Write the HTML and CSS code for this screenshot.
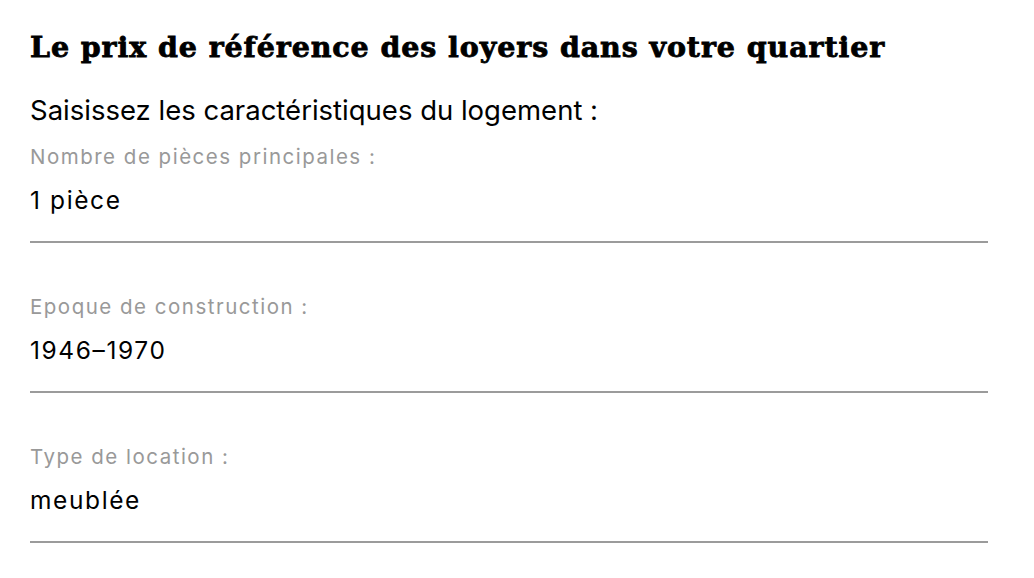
FILE: index.html
```html
<!DOCTYPE html>
<html lang="fr">
<head>
<meta charset="utf-8">
<title>Le prix de référence des loyers</title>
<link rel="stylesheet" href="styles.css">
</head>
<body>
<main class="form">
  <h1 class="title">Le prix de référence des loyers dans votre quartier</h1>
  <p class="intro">Saisissez les caractéristiques du logement :</p>
  <div class="fields">
    <div class="field">
      <div class="label">Nombre de pièces principales :</div>
      <div class="value">1 pièce</div>
    </div>
    <div class="field">
      <div class="label">Epoque de construction :</div>
      <div class="value">1946–1970</div>
    </div>
    <div class="field">
      <div class="label">Type de location :</div>
      <div class="value">meublée</div>
    </div>
  </div>
</main>
</body>
</html>
```
FILE: styles.css
```css
html, body {
  margin: 0;
  padding: 0;
  background: #ffffff;
}

.form {
  width: 958px;
  padding: 27px 30px 0;
  font-family: Inter, "Liberation Sans", Arial, sans-serif;
  color: #000000;
}

.title {
  margin: 0;
  font-family: "DejaVu Serif", serif;
  font-weight: 700;
  font-size: 28.5px;
  line-height: 40px;
  letter-spacing: 0.9px;
  -webkit-text-stroke: 0.8px #000000;
  white-space: nowrap;
}

.intro {
  margin: 27px 0 17px;
  font-size: 27.5px;
  line-height: 32px;
}

.fields {
  display: flex;
  flex-direction: column;
  gap: 50px;
}

.field {
  display: flex;
  flex-direction: column;
  gap: 13px;
  padding-bottom: 25px;
  border-bottom: 2px solid #9b9b9b;
}

.label {
  font-size: 20.5px;
  line-height: 28px;
  letter-spacing: 1.5px;
  color: #999999;
}

.value {
  font-size: 24.5px;
  line-height: 32px;
  letter-spacing: 1.6px;
}
```
